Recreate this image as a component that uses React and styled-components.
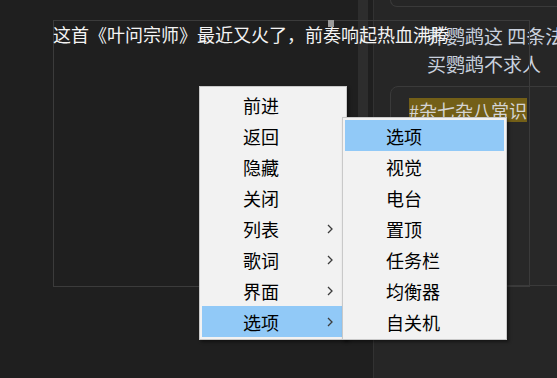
import styled, { createGlobalStyle } from "styled-components";

const GlobalStyle = createGlobalStyle`
body {
  margin: 0;
  background: #1f1f1f;
  font-family: "Noto Sans CJK SC", "Noto Sans", sans-serif;
}
`

const Screen = styled.div`
position: relative;
display: flex;
width: 557px;
height: 378px;
overflow: hidden;
background: #1f1f1f;
`
const LeftPane = styled.div`
width: 358px;
background: #1f1f1f;
`
const ScrollTrack = styled.div`
width: 15px;
padding-right: 5px;
box-sizing: border-box;
`
const Thumb = styled.div`
width: 10px;
height: 260px;
background: #2d2d2d;
`
const SidePanel = styled.div`
flex: 1;
min-width: 0;
display: flex;
flex-direction: column;
padding-left: 16px;
border-left: 1px solid #323232;
background: #262626;
overflow: hidden;
`
const CardTail = styled.div`
flex: none;
width: 220px;
height: 6px;
border: 1px solid #3a3a3a;
border-top: none;
border-radius: 0 0 8px 8px;
`
const Title = styled.div`
margin: 15px 0 0 37px;
font-size: 19px;
line-height: 28px;
color: #c9d1de;
white-space: nowrap;
`
const TopicCard = styled.div`
flex: none;
margin-top: 8px;
width: 220px;
height: 200px;
padding: 11px 18px;
box-sizing: border-box;
border: 1px solid #3a3a3a;
border-radius: 8px;
background: #282828;
`
const Tag = styled.span`
display: inline-block;
background: #735f17;
color: #d4d4d4;
font-size: 18px;
line-height: 24px;
white-space: nowrap;
`

// floating lyric window laid over the page
const LyricWindow = styled.div`
position: absolute;
left: 53px;
top: 20px;
width: 477px;
height: 267px;
box-sizing: border-box;
border: 1px solid #3b3b3b;
`
const LyricText = styled.div`
margin-left: -1px;
font-size: 18px;
line-height: 26px;
color: #f4f4f4;
white-space: nowrap;
`
const Handle = styled.div`
position: absolute;
left: 274px;
top: -1px;
width: 6px;
height: 7px;
background: #9a9a9a;
`

const Menu = styled.div`
position: absolute;
left: ${p => p.$left}px;
top: ${p => p.$top}px;
width: ${p => p.$width}px;
padding: 2px;
box-sizing: border-box;
border: 1px solid #c9c9c9;
background: #f2f2f2;
box-shadow: 2px 2px 3px rgba(0, 0, 0, 0.45);
z-index: ${p => p.$z};
`
const Item = styled.div`
display: flex;
align-items: center;
height: 31px;
padding: 0 11px 0 41px;
font-size: 18px;
color: #000;
background: ${p => (p.$active ? "#91c9f7" : "transparent")};
`
const Chevron = styled.svg`
margin-left: auto;
width: 6px;
height: 10px;
`

const Arrow = () => (
  <Chevron viewBox="0 0 6 10">
    <polyline points="1,1 5,5 1,9" fill="none" stroke="#3c3c3c" strokeWidth="1.3" />
  </Chevron>
)

const mainItems = [
  { label: "前进" },
  { label: "返回" },
  { label: "隐藏" },
  { label: "关闭" },
  { label: "列表", sub: true },
  { label: "歌词", sub: true },
  { label: "界面", sub: true },
  { label: "选项", sub: true, active: true },
]
const subItems = ["选项", "视觉", "电台", "置顶", "任务栏", "均衡器", "自关机"]

function App() {
  return (
    <>
      <GlobalStyle />
      <Screen>
        <LeftPane />
        <ScrollTrack>
          <Thumb />
        </ScrollTrack>
        <SidePanel>
          <CardTail />
          <Title>
            养鹦鹉这 四条法则
            <br />
            买鹦鹉不求人
          </Title>
          <TopicCard>
            <Tag>#杂七杂八常识</Tag>
          </TopicCard>
        </SidePanel>

        <LyricWindow>
          <LyricText>这首《叶问宗师》最近又火了，前奏响起热血沸腾</LyricText>
          <Handle />
        </LyricWindow>

        <Menu $left={199} $top={86} $width={148} $z={2}>
          {mainItems.map(it => (
            <Item key={it.label} $active={it.active}>
              {it.label}
              {it.sub && <Arrow />}
            </Item>
          ))}
        </Menu>
        <Menu $left={342} $top={117} $width={165} $z={3}>
          {subItems.map((label, i) => (
            <Item key={label} $active={i === 0}>
              {label}
            </Item>
          ))}
        </Menu>
      </Screen>
    </>
  )
}
export default App;
